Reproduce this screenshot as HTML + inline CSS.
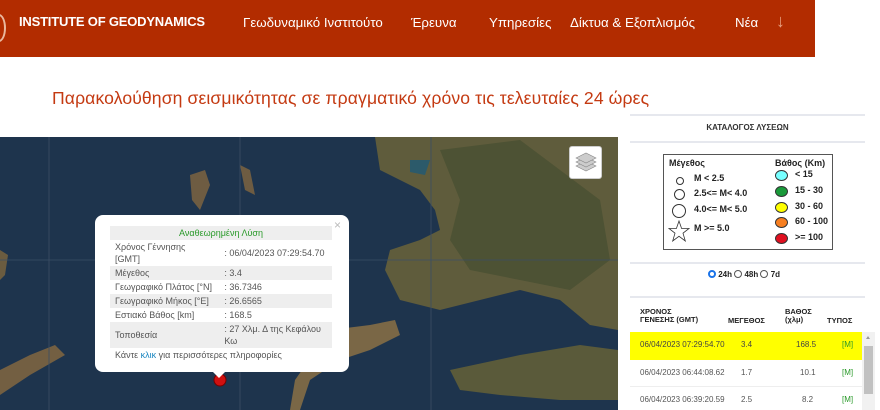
<!DOCTYPE html>
<html><head><meta charset="utf-8"><style>
*{margin:0;padding:0;box-sizing:border-box}
html,body{width:880px;height:410px;overflow:hidden}
body{background:#fff;font-family:"Liberation Sans","DejaVu Sans",sans-serif;position:relative}
.hdr{position:absolute;left:0;top:0;width:815px;height:57px;background:#b22c00}
.hdr .logo{position:absolute;left:19px;top:14px;color:#fff;font-weight:bold;font-size:13px;letter-spacing:-0.2px}
.hdr .nav{position:absolute;top:15px;color:#fff;font-size:13.3px}
.title{position:absolute;left:52px;top:88px;color:#c43a12;font-size:17.6px;letter-spacing:0.1px}
.map{position:absolute;left:0;top:137px;width:618px;height:273px;overflow:hidden;background:#1f3650}
.pop{position:absolute;left:95px;top:215px;width:254px;height:157px;background:#fff;border-radius:8px;font-size:9px;color:#555}
.pop table{position:absolute;left:15px;top:11px;width:222px;border-collapse:collapse}
.pop td{padding:1px 5px;line-height:12px;vertical-align:middle}
.pop tr.g td{background:#eee}
.panel{position:absolute;left:630px;top:112px;width:250px;height:298px;font-size:8px;color:#222;overflow:hidden}
.hr{position:absolute;left:0;width:235px;height:2px;background:#e6e8ee}
</style></head><body>
<div class="hdr">
<div style="position:absolute;left:-8px;top:14px;width:14px;height:28px;border:2px solid #e9b89e;border-radius:50%"></div>
<div class="logo">INSTITUTE OF GEODYNAMICS</div>
<div class="nav" style="left:243px">Γεωδυναμικό Ινστιτούτο</div>
<div class="nav" style="left:411px">Έρευνα</div>
<div class="nav" style="left:489px">Υπηρεσίες</div>
<div class="nav" style="left:570px">Δίκτυα &amp; Εξοπλισμός</div>
<div class="nav" style="left:735px">Νέα</div>
<div class="nav" style="left:776px;top:11px;font-size:18px;color:#e7a080">↓</div>
</div>
<div class="title">Παρακολούθηση σεισμικότητας σε πραγματικό χρόνο τις τελευταίες 24 ώρες</div>

<div class="map">
<svg width="618" height="273" viewBox="0 137 618 273">
<rect x="0" y="137" width="618" height="273" fill="#1e344d"/>
<path d="M375 137 L618 137 L618 330 L590 325 L560 300 L520 290 L480 300 L440 310 L400 300 L385 270 L390 250 L420 240 L440 230 L435 210 L420 190 L400 180 L380 170 Z" fill="#5f5c3c"/>
<path d="M440 150 L520 140 L560 170 L600 200 L610 260 L570 290 L520 280 L470 270 L450 240 L460 200 Z" fill="#4d5234"/>
<path d="M410 160 L430 160 L425 175 L410 172 Z" fill="#2c5a6a"/>
<path d="M330 330 L370 325 L395 320 L400 335 L370 350 L340 360 L310 380 L300 410 L290 410 L295 380 Z" fill="#7a6746"/>
<path d="M450 370 L520 355 L580 345 L618 350 L618 400 L560 400 L500 395 L460 390 Z" fill="#5a5a3a"/>
<path d="M0 370 L30 355 L55 345 L65 355 L30 375 L0 395 Z" fill="#735f42"/>
<path d="M190 175 L205 170 L210 185 L200 210 L192 200 Z" fill="#6e5c42"/>
<path d="M240 165 L250 170 L255 195 L245 190 Z" fill="#6e5c42"/>
<path d="M0 250 L8 255 L5 275 L0 280 Z" fill="#6b5c40"/>
<g stroke="#3b4f66" stroke-width="0.8"><line x1="49" y1="137" x2="49" y2="410"/><line x1="240" y1="137" x2="240" y2="410"/><line x1="431" y1="137" x2="431" y2="410"/><line x1="0" y1="260" x2="618" y2="260"/></g>
<circle cx="220" cy="380" r="6" fill="#d01010" stroke="#700" stroke-width="1"/>
</svg>
<div style="position:absolute;left:569px;top:9px;width:33px;height:33px;background:#fff;border-radius:3px;border:1px solid #ccc">
<svg width="31" height="31"><g fill="#ccc" stroke="#888" stroke-width="0.6"><path d="M6 19 L16 14 L26 19 L16 24 Z"/><path d="M6 15 L16 10 L26 15 L16 20 Z"/><path d="M6 11 L16 6 L26 11 L16 16 Z"/></g></svg></div>
</div>

<div class="pop">
<div style="position:absolute;right:8px;top:3px;color:#bbb;font-size:12px">×</div>
<table>
<tr class="g"><td colspan="2" style="text-align:center;color:#2a9a2a">Αναθεωρημένη Λύση</td></tr>
<tr><td>Χρόνος Γέννησης<br>[GMT]</td><td>: 06/04/2023 07:29:54.70</td></tr>
<tr class="g"><td>Μέγεθος</td><td>: 3.4</td></tr>
<tr><td>Γεωγραφικό Πλάτος [°N]</td><td>: 36.7346</td></tr>
<tr class="g"><td>Γεωγραφικό Μήκος [°E]</td><td>: 26.6565</td></tr>
<tr><td>Εστιακό Βάθος [km]</td><td>: 168.5</td></tr>
<tr class="g"><td>Τοποθεσία</td><td>: 27 Χλμ. Δ της Κεφάλου<br>Κω</td></tr>
<tr><td colspan="2">Κάντε <span style="color:#1a86c0">κλικ</span> για περισσότερες πληροφορίες</td></tr>
</table>
<div style="position:absolute;left:117px;bottom:-6px;width:0;height:0;border-left:7px solid transparent;border-right:7px solid transparent;border-top:7px solid #fff"></div>
</div>

<div class="panel">
<div class="hr" style="top:2px"></div>
<div style="position:absolute;top:11px;width:235px;text-align:center;font-size:8px;font-weight:bold;color:#333">ΚΑΤΑΛΟΓΟΣ ΛΥΣΕΩΝ</div>
<div class="hr" style="top:29px"></div>
<div style="position:absolute;left:33px;top:42px;width:170px;height:96px;border:1px solid #555;font-weight:bold;font-size:9px">
<div style="position:absolute;left:5px;top:3px">Μέγεθος</div>
<div style="position:absolute;left:12px;top:22px;width:8px;height:8px;border:1px solid #333;border-radius:50%"></div><div style="position:absolute;left:30px;top:18px">M &lt; 2.5</div>
<div style="position:absolute;left:10px;top:34px;width:11px;height:11px;border:1px solid #333;border-radius:50%"></div><div style="position:absolute;left:30px;top:33px">2.5&lt;= M&lt; 4.0</div>
<div style="position:absolute;left:8px;top:49px;width:14px;height:14px;border:1px solid #333;border-radius:50%"></div><div style="position:absolute;left:30px;top:49px">4.0&lt;= M&lt; 5.0</div>
<svg style="position:absolute;left:4px;top:65px" width="22" height="22"><path d="M11 1 L13.6 8.5 L21 8.5 L15 13.2 L17.3 21 L11 16.3 L4.7 21 L7 13.2 L1 8.5 L8.4 8.5 Z" fill="none" stroke="#333" stroke-width="0.8"/></svg><div style="position:absolute;left:30px;top:68px">M &gt;= 5.0</div>
<div style="position:absolute;left:111px;top:3px">Βάθος (Km)</div>
<div style="position:absolute;left:111px;top:15px;width:13px;height:11px;border:1px solid #333;border-radius:50%;background:#7ff"></div><div style="position:absolute;left:131px;top:14px">&lt; 15</div>
<div style="position:absolute;left:111px;top:31px;width:13px;height:11px;border:1px solid #333;border-radius:50%;background:#1a9a3a"></div><div style="position:absolute;left:131px;top:30px">15 - 30</div>
<div style="position:absolute;left:111px;top:47px;width:13px;height:11px;border:1px solid #333;border-radius:50%;background:#ff0"></div><div style="position:absolute;left:131px;top:46px">30 - 60</div>
<div style="position:absolute;left:111px;top:62px;width:13px;height:11px;border:1px solid #333;border-radius:50%;background:#f77f20"></div><div style="position:absolute;left:131px;top:61px">60 - 100</div>
<div style="position:absolute;left:111px;top:78px;width:13px;height:11px;border:1px solid #333;border-radius:50%;background:#e01020"></div><div style="position:absolute;left:131px;top:77px">&gt;= 100</div>
</div>
<div class="hr" style="top:150px"></div>
<div style="position:absolute;left:78px;top:158px;font-weight:bold;font-size:8px"><span style="display:inline-block;width:8px;height:8px;border-radius:50%;border:2.5px solid #1a73e8;vertical-align:-1px"></span> 24h <span style="display:inline-block;width:8px;height:8px;border-radius:50%;border:1px solid #555;vertical-align:-1px"></span> 48h <span style="display:inline-block;width:8px;height:8px;border-radius:50%;border:1px solid #555;vertical-align:-1px"></span> 7d</div>
<div class="hr" style="top:184px"></div>
<div style="position:absolute;left:10px;top:196px;font-weight:bold;font-size:7.5px;line-height:8px">ΧΡΟΝΟΣ<br>ΓΕΝΕΣΗΣ (GMT)</div>
<div style="position:absolute;left:98px;top:204px;font-weight:bold;font-size:7.5px">ΜΕΓΕΘΟΣ</div>
<div style="position:absolute;left:155px;top:196px;font-weight:bold;font-size:7.5px;line-height:8px">ΒΑΘΟΣ<br>(χλμ)</div>
<div style="position:absolute;left:197px;top:204px;font-weight:bold;font-size:7.5px">ΤΥΠΟΣ</div>
<div style="position:absolute;left:0;top:220px;width:232px;height:28px;background:#ff0"></div>
<div style="position:absolute;left:0;top:274px;width:232px;height:1px;background:#eee"></div>
<div style="position:absolute;left:232px;top:220px;width:13px;height:78px;background:#f1f1f1"></div>
<div style="position:absolute;left:236px;top:224px;width:0;height:0;border-left:2.5px solid transparent;border-right:2.5px solid transparent;border-bottom:3px solid #999"></div>
<div style="position:absolute;left:234px;top:234px;width:9px;height:48px;background:#c1c1c1"></div>
<div style="position:absolute;left:0;top:228px;width:232px;font-size:8px;color:#444">
<span style="position:absolute;left:10px">06/04/2023 07:29:54.70</span><span style="position:absolute;left:111px">3.4</span><span style="position:absolute;left:166px">168.5</span><span style="position:absolute;left:212px;color:#2a9a2a">[M]</span></div>
<div style="position:absolute;left:0;top:256px;width:232px;font-size:8px;color:#555">
<span style="position:absolute;left:10px">06/04/2023 06:44:08.62</span><span style="position:absolute;left:111px">1.7</span><span style="position:absolute;left:170px">10.1</span><span style="position:absolute;left:212px;color:#2a9a2a">[M]</span></div>
<div style="position:absolute;left:0;top:283px;width:232px;font-size:8px;color:#555">
<span style="position:absolute;left:10px">06/04/2023 06:39:20.59</span><span style="position:absolute;left:111px">2.5</span><span style="position:absolute;left:172px">8.2</span><span style="position:absolute;left:212px;color:#2a9a2a">[M]</span></div>
</div>
</body></html>
